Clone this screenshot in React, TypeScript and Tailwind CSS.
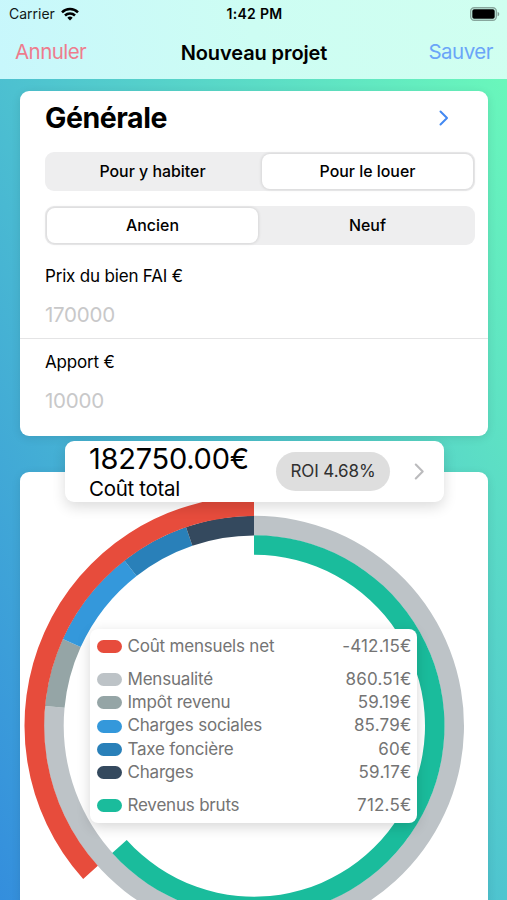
import React from "react";

const CX = 234;
const CY = 253.7;

const point = (radius: number, degrees: number) => {
  const a = (degrees * Math.PI) / 180;
  return `${(CX + radius * Math.sin(a)).toFixed(2)} ${(CY - radius * Math.cos(a)).toFixed(2)}`;
};

const ring = (inner: number, outer: number, from: number, to: number) => {
  const large = to - from > 180 ? 1 : 0;
  return `M${point(outer, from)}A${outer} ${outer} 0 ${large} 1 ${point(outer, to)}L${point(inner, to)}A${inner} ${inner} 0 ${large} 0 ${point(inner, from)}Z`;
};

const segments = [
  { color: "#bdc3c7", d: ring(190.3, 210, 0, 275.4) },
  { color: "#95a5a6", d: ring(190.3, 210, 275.4, 294.4) },
  { color: "#3498db", d: ring(190.3, 210, 294.4, 321.9) },
  { color: "#2980b9", d: ring(190.3, 210, 321.9, 341.1) },
  { color: "#34495e", d: ring(190.3, 210, 341.1, 360) },
  { color: "#e74c3c", d: ring(209.8, 229.5, 228.1, 360) },
  { color: "#1abc9c", d: ring(171, 190.5, 0, 228.1) },
];

const legend = [
  { label: "Coût mensuels net", value: "-412.15€", dot: "bg-[#e74c3c]", gap: "mb-[10px]" },
  { label: "Mensualité", value: "860.51€", dot: "bg-[#bdc3c7]", gap: "" },
  { label: "Impôt revenu", value: "59.19€", dot: "bg-[#95a5a6]", gap: "" },
  { label: "Charges sociales", value: "85.79€", dot: "bg-[#3498db]", gap: "" },
  { label: "Taxe foncière", value: "60€", dot: "bg-[#2980b9]", gap: "" },
  { label: "Charges", value: "59.17€", dot: "bg-[#34495e]", gap: "mb-[10px]" },
  { label: "Revenus bruts", value: "712.5€", dot: "bg-[#1abc9c]", gap: "" },
];

function Chevron({ className }: { className: string }) {
  return (
    <svg viewBox="0 0 10 16" className={className} fill="none" stroke="currentColor" strokeWidth="2" strokeLinecap="round" strokeLinejoin="round">
      <path d="M1.5 1.5 8 8l-6.500 6.500" />
    </svg>
  );
}

function Segmented({ options, selected }: { options: string[]; selected: number }) {
  return (
    <div className="flex h-[39px] w-[430px] gap-[4px] rounded-[9px] bg-[#eeeeef] p-[2px]">
      {options.map((option, i) => (
        <div
          key={option}
          className={
            i === selected
              ? "flex flex-1 items-center justify-center rounded-[8px] bg-white pt-[1px] text-[15.900px] font-medium shadow-[0_0_3px_1px_rgba(0,0,0,0.100)]"
              : "flex flex-1 items-center justify-center pt-[1px] text-[15.900px] font-medium"
          }
        >
          {option}
        </div>
      ))}
    </div>
  );
}

function Header() {
  return (
    <header className="h-[79px] bg-[linear-gradient(80deg,#c8f7fc,#cdfdf3_50%,#d0fff0)]">
      <div className="grid h-[27px] grid-cols-3 items-center pl-[9px] pr-[7px] text-[14px]">
        <div className="flex items-center gap-[6px]">
          <span className="text-[#111918]">Carrier</span>
          <svg viewBox="0 0 18 14" className="h-[14px] w-[18px]" fill="none" stroke="black" strokeWidth="2.500">
            <path d="M1 5.300a11.400 11.400 0 0 1 16 0" />
            <path d="M4 8.500a7.100 7.100 0 0 1 10 0" />
            <path d="M9 13.500 6.300 10.800a3.900 3.900 0 0 1 5.400 0Z" fill="black" stroke="none" />
          </svg>
        </div>
        <span className="text-center text-[14px] font-semibold tracking-[0.300px]">1:42 PM</span>
        <svg viewBox="0 0 30 14" className="h-[14px] w-[30px] justify-self-end">
          <rect x="0.700" y="0.700" width="25.600" height="12.600" rx="3.500" fill="none" stroke="#000" strokeOpacity="0.350" strokeWidth="1.400" />
          <rect x="2.300" y="2.300" width="22.400" height="9.400" rx="1.800" fill="#000" />
          <path d="M27.600 4.700c2.200.800 2.200 3.800 0 4.600Z" fill="#000" fillOpacity="0.400" />
        </svg>
      </div>
      <div className="grid h-[50px] grid-cols-3 items-center pl-[15px] pr-[14px] pt-[1px] text-[20.500px]">
        <span className="tracking-[-0.550px] text-[#ee7c8d]">Annuler</span>
        <span className="justify-self-center whitespace-nowrap text-[20px] font-semibold tracking-[-0.100px]">Nouveau projet</span>
        <span className="justify-self-end tracking-[-0.500px] text-[#6aa5f8]">Sauver</span>
      </div>
    </header>
  );
}

function Field({ label, placeholder }: { label: string; placeholder: string }) {
  return (
    <div className="flex h-[86px] flex-col pl-[25px]">
      <span className="mt-[12px] text-[17px] leading-[24px] tracking-[-0.180px]">{label}</span>
      <span className="mt-[13px] text-[20.500px] leading-[28px] tracking-[-0.250px] text-[#c8c8c9]">{placeholder}</span>
    </div>
  );
}

export default function App() {
  return (
    <div className="h-[900px] w-[507px] overflow-hidden bg-[linear-gradient(to_top_right,#348edd,#4fc5cf_50%,#6cfcb9)] font-['Inter',sans-serif] text-black">
      <Header />
      <main className="relative px-[20px] pt-[12px]">
        <section className="h-[345px] w-[468px] rounded-[9px] bg-white shadow-[0_2px_10px_rgba(0,0,0,0.100)]">
          <div className="flex h-[61px] items-center justify-between pb-[7px] pl-[25px] pr-[39px]">
            <h1 className="text-[28.500px] font-bold tracking-[-0.450px]">Générale</h1>
            <Chevron className="h-[16px] w-[10px] text-[#4389f2]" />
          </div>
          <div className="flex flex-col gap-[15px] pl-[25px]">
            <Segmented options={["Pour y habiter", "Pour le louer"]} selected={1} />
            <Segmented options={["Ancien", "Neuf"]} selected={0} />
          </div>
          <div className="mt-[7px]">
            <Field label="Prix du bien FAI €" placeholder="170000" />
            <div className="h-px bg-[#e4e4e5]" />
            <div className="-mt-px">
              <Field label="Apport €" placeholder="10000" />
            </div>
          </div>
        </section>

        <section className="relative mt-[36px] h-[470px] w-[468px] rounded-[9px] bg-white shadow-[0_2px_10px_rgba(0,0,0,0.100)]">
          <svg viewBox="0 0 468 490" className="h-[490px] w-[468px]">
            {segments.map((s) => (
              <path key={s.d} d={s.d} fill={s.color} />
            ))}
          </svg>
          <div className="absolute left-[70px] top-[157px] h-[194px] w-[327px] rounded-[8px] bg-white pl-[6.500px] pr-[5.500px] pt-[6px] text-[17px] text-[#747474] shadow-[0_4px_14px_rgba(0,0,0,0.160)]">
            {legend.map((row) => (
              <div key={row.label} className={`flex h-[23.200px] items-center ${row.gap}`}>
                <span className={`mr-[6px] h-[13px] w-[25px] rounded-full ${row.dot}`} />
                <span className="tracking-[-0.200px]">{row.label}</span>
                <span className="ml-auto tracking-[0.200px]">{row.value}</span>
              </div>
            ))}
          </div>
        </section>

        <div className="absolute left-[64.500px] top-[362px] flex h-[61px] w-[379px] items-center rounded-[9px] bg-white pl-[24.500px] shadow-[0_5px_14px_rgba(0,0,0,0.140)]">
          <div className="w-[187px] pt-[2px]">
            <div className="text-[29px] leading-[33px] tracking-[-0.250px]">182750.00€</div>
            <div className="text-[20.500px] leading-[28px] tracking-[-0.300px]">Coût total</div>
          </div>
          <div className="flex h-[39px] w-[114px] items-center justify-center rounded-full bg-[#dedede] pt-[1px] text-[17px] tracking-[-0.100px] text-[#303030]">ROI 4.68%</div>
          <Chevron className="ml-[24px] h-[17px] w-[11px] text-[#bbbbbd]" />
        </div>
      </main>
    </div>
  );
}
